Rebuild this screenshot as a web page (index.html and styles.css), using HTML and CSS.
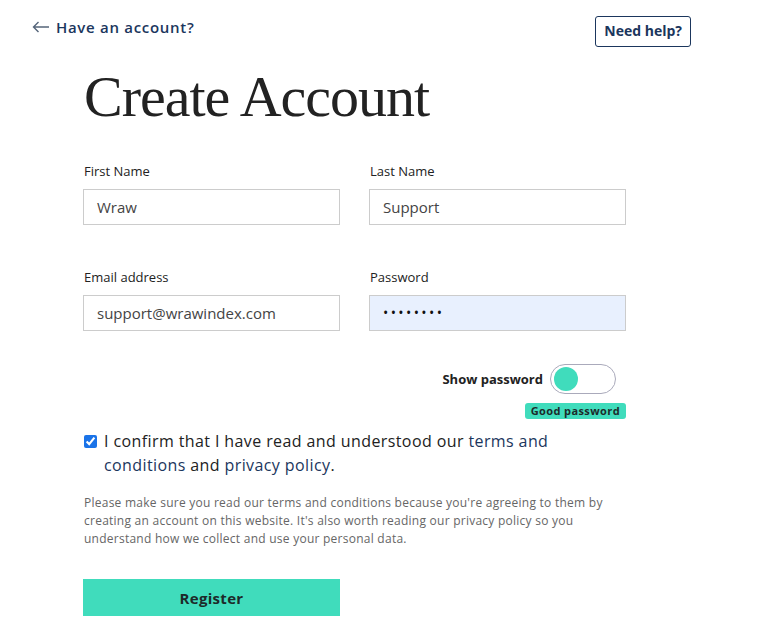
FILE: index.html
```html
<!DOCTYPE html>
<html>
<head>
<meta charset="utf-8">
<link rel="stylesheet" href="styles.css">
</head>
<body>
<header class="topbar">
  <a class="back" href="#"><svg class="arrow" width="18" height="12" viewBox="0 0 18 12"><path d="M17 6H1.5M6.5 1L1.5 6l5 5" fill="none" stroke="#55657a" stroke-width="1.4"/></svg><span>Have an account?</span></a>
  <a class="help" href="#">Need help?</a>
</header>
<main class="form">
  <h1 class="title">Create Account</h1>
  <div class="grid">
    <label class="field"><span class="label">First Name</span><span class="input">Wraw</span></label>
    <label class="field"><span class="label">Last Name</span><span class="input">Support</span></label>
    <label class="field"><span class="label">Email address</span><span class="input">support@wrawindex.com</span></label>
    <label class="field"><span class="label">Password</span><span class="input filled">••••••••</span></label>
  </div>
  <div class="pwrow">
    <span class="showlbl">Show password</span>
    <span class="toggle"><span class="knob"></span></span>
  </div>
  <div class="badgerow"><span class="badge">Good password</span></div>
  <div class="confirm">
    <input type="checkbox" class="check" checked>
    <p>I confirm that I have read and understood our <a href="#">terms and conditions</a> and <a href="#">privacy policy</a>.</p>
  </div>
  <p class="note">Please make sure you read our terms and conditions because you're agreeing to them by creating an account on this website. It's also worth reading our privacy policy so you understand how we collect and use your personal data.</p>
  <button class="register">Register</button>
</main>
</body>
</html>
```
FILE: styles.css
```css
* { box-sizing: border-box; }
body {
  margin: 0;
  font-family: "Open Sans", "Liberation Sans", sans-serif;
  color: #222;
  background: #fff;
}
a { text-decoration: none; color: #1b365d; }
.topbar {
  display: flex;
  justify-content: space-between;
  align-items: flex-start;
  padding: 16px 70px 0 32px;
}
.back {
  display: flex;
  align-items: center;
  gap: 6px;
  font-size: 15px;
  font-weight: 600;
  letter-spacing: 0.7px;
  margin-top: 1px;
  color: #1b365d;
}
.arrow { display: block; }
.help {
  border: 1px solid #1b365d;
  border-radius: 3px;
  font-size: 14px;
  font-weight: 700;
  padding: 5px 8px 6px;
  line-height: 18px;
}
.form {
  width: 542px;
  margin-left: 84px;
}
.title {
  font-family: "Liberation Serif", serif;
  font-weight: 400;
  font-size: 58px;
  line-height: 60px;
  margin: 20px 0 0;
  color: #222;
  letter-spacing: -1px;
}
.grid {
  display: grid;
  grid-template-columns: 256px 256px;
  column-gap: 30px;
  row-gap: 43px;
  margin-top: 35px;
}
.field { display: flex; flex-direction: column; }
.label {
  font-size: 13px;
  line-height: 18px;
  color: #222;
  margin-bottom: 9px;
}
.input {
  height: 36px;
  border: 1px solid #ccc;
  padding: 0 13px;
  font-size: 15px;
  line-height: 34px;
  color: #444;
  margin-left: -1px;
}
.input.filled { background: #e8f0fe; color: #111; letter-spacing: 2.4px; font-size: 14px; }
.pwrow {
  display: flex;
  justify-content: flex-end;
  align-items: center;
  gap: 7px;
  margin-top: 33px;
}
.showlbl { font-size: 13px; font-weight: 700; color: #222; }
.toggle {
  width: 66px;
  height: 30px;
  border: 1px solid #aab;
  border-radius: 15px;
  padding: 2px;
  display: flex;
  align-items: center;
  margin-right: 10px;
}
.knob {
  width: 24px;
  height: 24px;
  border-radius: 50%;
  background: #40dcbc;
  margin-left: 1px;
}
.badgerow { display: flex; justify-content: flex-end; margin-top: 9px; }
.badge {
  background: #40dcbc;
  border-radius: 3px;
  font-size: 11px;
  font-weight: 700;
  line-height: 16px;
  padding: 0 6px;
  letter-spacing: 0.4px;
  color: #1d2a2a;
}
.confirm {
  display: flex;
  align-items: flex-start;
  gap: 7px;
  margin-top: 10px;
}
.check {
  margin: 6px 0 0 0;
  width: 13px;
  height: 13px;
  flex: none;
  accent-color: #1a73e8;
}
.confirm p {
  margin: 0;
  font-size: 16px;
  line-height: 24px;
  letter-spacing: 0.4px;
  color: #222;
}
.note {
  margin: 17px 0 0;
  font-size: 12px;
  line-height: 18px;
  letter-spacing: 0.25px;
  color: #666;
}
.register {
  display: block;
  margin-top: 31px;
  width: 257px;
  height: 37px;
  border: none;
  background: #40dcbc;
  font-family: "Open Sans", "Liberation Sans", sans-serif;
  font-size: 15px;
  font-weight: 700;
  letter-spacing: 0.3px;
  color: #1d2a2a;
  margin-left: -1px;
}
```
